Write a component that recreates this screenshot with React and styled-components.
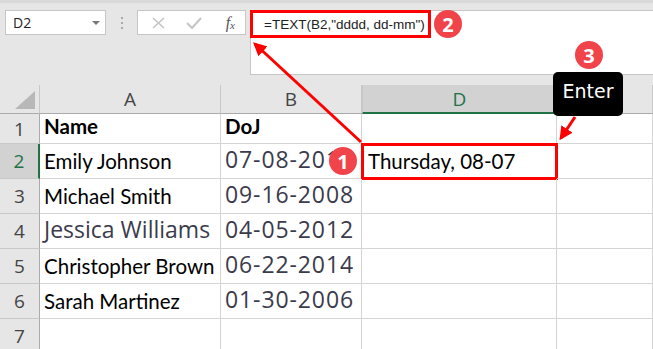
import React from "react";
import styled, { createGlobalStyle } from "styled-components";

const GlobalStyle = createGlobalStyle`
  body {
    margin: 0;
    background: #ffffff;
    overflow: hidden;
  }
`;

const green = "#217346";
const red = "#ff0000";

const App = () => {
  const names = [
    { name: "Name", doj: "DoJ", header: true },
    { name: "Emily Johnson", doj: "07-08-2019", result: "Thursday, 08-07" },
    { name: "Michael Smith", doj: "09-16-2008" },
    { name: "Jessica Williams", doj: "04-05-2012", alt: true },
    { name: "Christopher Brown", doj: "06-22-2014" },
    { name: "Sarah Martinez", doj: "01-30-2006" },
    { name: "", doj: "" },
  ];

  return (
    <Page>
      <GlobalStyle />
      <TopBar>
        <NameBox>
          <span>D2</span>
          <Caret />
        </NameBox>
        <Grip>
          <i />
          <i />
          <i />
        </Grip>
        <FxButtons>
          <FxIcon>
            <svg width="13" height="12" viewBox="0 0 13 12">
              <path d="M1 1 L12 11 M12 1 L1 11" stroke="#c4c4c4" strokeWidth="1.6" fill="none" />
            </svg>
          </FxIcon>
          <FxIcon>
            <svg width="16" height="12" viewBox="0 0 16 12">
              <path d="M1 6 L6 11 L15 1" stroke="#c4c4c4" strokeWidth="2" fill="none" />
            </svg>
          </FxIcon>
          <FxLabel>
            f<sub>x</sub>
          </FxLabel>
        </FxButtons>
        <FormulaBar>
          <FormulaText>=TEXT(B2,"dddd, dd-mm")</FormulaText>
        </FormulaBar>
      </TopBar>

      <Sheet>
        <Corner>
          <CornerTriangle />
        </Corner>
        <ColHeader>A</ColHeader>
        <ColHeader>B</ColHeader>
        <ColHeader $selected>D</ColHeader>
        <ColHeader />

        {names.map((row, i) => (
          <React.Fragment key={i}>
            <RowHeader $selected={i === 1}>{i + 1}</RowHeader>
            <Cell $bold={row.header} $alt={row.alt}>
              {row.name}
            </Cell>
            <Cell $bold={row.header} $date={!row.header}>
              {row.doj}
            </Cell>
            <Cell $outlined={!!row.result}>{row.result || ""}</Cell>
            <Cell />
          </React.Fragment>
        ))}
      </Sheet>

      <Overlay width="653" height="349" viewBox="0 0 653 349">
        <defs>
          <marker
            id="head"
            viewBox="0 0 10 10"
            refX="8"
            refY="5"
            markerWidth="4.5"
            markerHeight="4.5"
            orient="auto"
          >
            <path d="M0 0 L10 5 L0 10 z" fill={red} />
          </marker>
        </defs>
        <line x1="361" y1="142" x2="255" y2="44" stroke={red} strokeWidth="3" markerEnd="url(#head)" />
        <line x1="575" y1="117" x2="561" y2="138" stroke={red} strokeWidth="3" markerEnd="url(#head)" />
      </Overlay>

      <EnterTip>Enter</EnterTip>
      <Badge $x={343} $y={161}>1</Badge>
      <Badge $x={448} $y={24}>2</Badge>
      <Badge $x={589} $y={55}>3</Badge>
    </Page>
  );
};

const Page = styled.div`
  position: relative;
  width: 653px;
  height: 349px;
  overflow: hidden;
  background: #e6e6e6;
`;

const TopBar = styled.div`
  display: flex;
  align-items: flex-start;
  height: 85px;
  box-sizing: border-box;
  padding: 7px 0 0 5px;
  border-top: 3px solid #d9d9d9;
`;

const NameBox = styled.div`
  box-sizing: border-box;
  width: 101px;
  height: 25px;
  background: #fff;
  border: 1px solid #c6c6c6;
  display: flex;
  align-items: center;
  justify-content: space-between;
  padding: 0 5px 0 7px;
  font-family: "Open Sans", sans-serif;
  font-size: 14px;
  color: #222;
`;

const Caret = styled.span`
  width: 0;
  height: 0;
  border-left: 4px solid transparent;
  border-right: 4px solid transparent;
  border-top: 4px solid #777;
`;

const Grip = styled.div`
  width: 31px;
  height: 25px;
  display: flex;
  flex-direction: column;
  align-items: center;
  justify-content: center;
  gap: 3px;

  i {
    width: 2px;
    height: 2px;
    background: #a8a8a8;
  }
`;

const FxButtons = styled.div`
  box-sizing: border-box;
  width: 109px;
  height: 25px;
  background: #fff;
  border: 1px solid #c6c6c6;
  display: flex;
  align-items: center;
  padding: 0 10px 0 14px;
  gap: 21px;
`;

const FxIcon = styled.span`
  display: flex;
  align-items: center;
`;

const FxLabel = styled.span`
  margin-left: auto;
  font-family: "Liberation Serif", serif;
  font-style: italic;
  font-size: 16px;
  color: #555;

  sub {
    font-size: 11px;
    vertical-align: -1px;
  }
`;

const FormulaBar = styled.div`
  box-sizing: border-box;
  margin-left: 4px;
  flex: 1;
  height: 65px;
  background: #fff;
  border: 1px solid #c6c6c6;
  border-right: none;
`;

const FormulaText = styled.div`
  box-sizing: border-box;
  display: inline-flex;
  align-items: center;
  width: 181px;
  height: 28px;
  margin: -1px 0 0 -1px;
  padding-left: 11px;
  border: 3px solid ${red};
  font-family: "Liberation Sans", Arial, sans-serif;
  font-size: 13.5px;
  color: #222;
`;

const Sheet = styled.div`
  display: grid;
  grid-template-columns: 40px 181px 141px 195px 1fr;
  grid-template-rows: 29px 30px repeat(6, 35px);
  background: #fff;
`;

const Corner = styled.div`
  position: relative;
  background: #e6e6e6;
  border-right: 1px solid #c8c8c8;
  border-bottom: 1px solid #ababab;
`;

const CornerTriangle = styled.div`
  position: absolute;
  right: 4px;
  bottom: 4px;
  width: 0;
  height: 0;
  border-left: 20px solid transparent;
  border-bottom: 18px solid #b8b8b8;
`;

const ColHeader = styled.div`
  box-sizing: border-box;
  background: ${({ $selected }) => ($selected ? "#d2d2d2" : "#e6e6e6")};
  border-right: 1px solid #c8c8c8;
  border-bottom: ${({ $selected }) => ($selected ? `2px solid ${green}` : "1px solid #ababab")};
  ${({ $selected }) => $selected && "border-left: 1px solid #c8c8c8;"}
  color: ${({ $selected }) => ($selected ? green : "#444")};
  font-family: "Open Sans", sans-serif;
  font-size: 19px;
  display: flex;
  align-items: center;
  justify-content: center;
`;

const RowHeader = styled.div`
  box-sizing: border-box;
  background: ${({ $selected }) => ($selected ? "#d2d2d2" : "#e6e6e6")};
  border-right: ${({ $selected }) => ($selected ? `2px solid ${green}` : "1px solid #ababab")};
  border-bottom: 1px solid #c8c8c8;
  color: ${({ $selected }) => ($selected ? green : "#444")};
  font-family: "Open Sans", sans-serif;
  font-size: 19px;
  display: flex;
  align-items: center;
  justify-content: center;
`;

const Cell = styled.div`
  box-sizing: border-box;
  position: relative;
  border-right: 1px solid #d4d4d4;
  border-bottom: 1px solid #d4d4d4;
  display: flex;
  align-items: flex-end;
  padding: 0 0 4px 4px;
  white-space: nowrap;
  overflow: hidden;
  font-family: ${({ $date, $alt }) => ($date || $alt ? '"Open Sans", sans-serif' : "Lato, sans-serif")};
  font-size: ${({ $date, $alt }) => ($date || $alt ? "23px" : "20.5px")};
  letter-spacing: ${({ $date }) => ($date ? "0.9px" : "0")};
  line-height: 1.2;
  font-weight: ${({ $bold }) => ($bold ? 700 : 400)};
  color: ${({ $date, $alt }) => ($date || $alt ? "#3b3b4c" : "#000")};
  ${({ $outlined }) =>
    $outlined &&
    `
    overflow: visible;
    outline: 3px solid ${red};
    outline-offset: -2px;
    padding-left: 6px;
  `}
`;

const Overlay = styled.svg`
  position: absolute;
  left: 0;
  top: 0;
  pointer-events: none;
`;

const EnterTip = styled.div`
  position: absolute;
  left: 553px;
  top: 72px;
  width: 70px;
  height: 44px;
  border-radius: 5px;
  background: #000;
  color: #fff;
  font-family: "DejaVu Sans", sans-serif;
  font-size: 19px;
  display: flex;
  align-items: center;
  justify-content: center;
  padding-bottom: 6px;
  box-sizing: border-box;
`;

const Badge = styled.div`
  position: absolute;
  left: ${({ $x }) => $x - 14}px;
  top: ${({ $y }) => $y - 14}px;
  width: 28px;
  height: 28px;
  border-radius: 50%;
  background: #f0434a;
  color: #fff;
  font-family: "Open Sans", sans-serif;
  font-weight: 700;
  font-size: 20px;
  display: flex;
  align-items: center;
  justify-content: center;
`;

export default App;
